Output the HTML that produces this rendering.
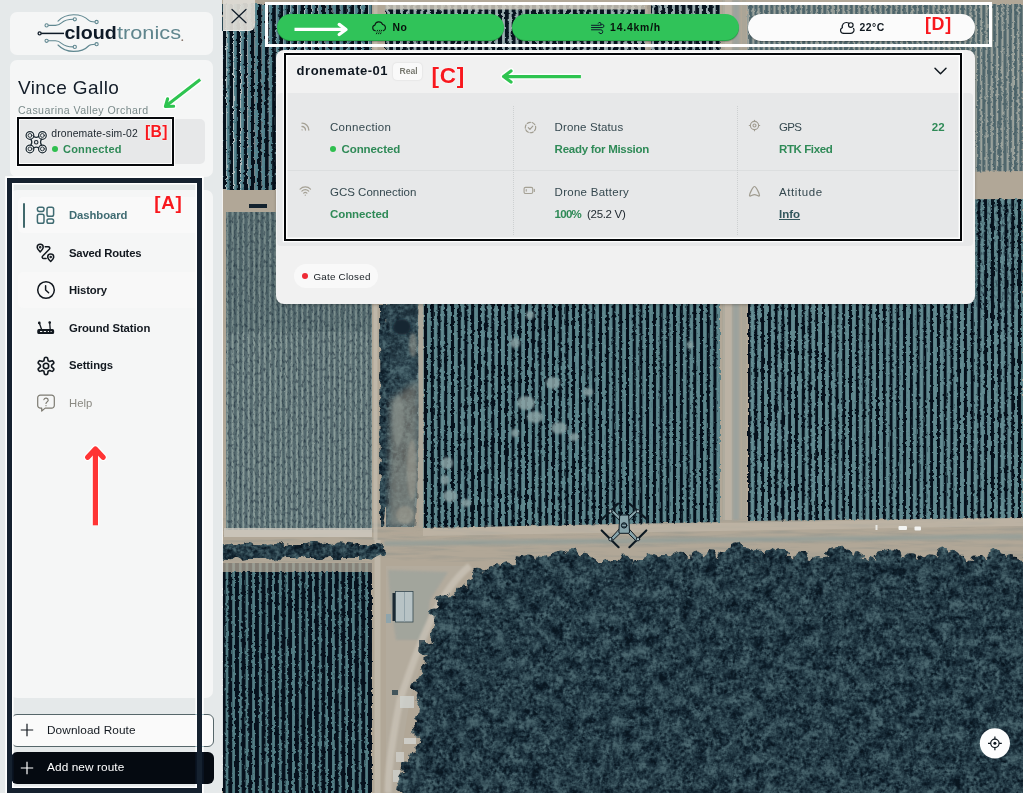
<!DOCTYPE html>
<html lang="en">
<head>
<meta charset="utf-8">
<title>Cloudtronics Dashboard</title>
<style>
*{box-sizing:border-box;margin:0;padding:0}
html,body{width:1023px;height:793px;overflow:hidden;background:#e6e9ea;font-family:"Liberation Sans",sans-serif;color:#111820}
.abs{position:absolute}
.t{position:absolute;white-space:nowrap;line-height:1}
#stage{position:relative;width:1023px;height:793px;overflow:hidden}
#map{position:absolute;left:0;top:0;width:1023px;height:793px}
.card{position:absolute;background:#f5f6f6;border-radius:7px}
.green{color:#2f8a57}
.lbl{color:#35484f;font-size:11.5px}
.val{font-weight:bold;font-size:11.5px}
.nav{font-weight:bold;font-size:11.3px;color:#12181f}
.ann{font-weight:bold;color:#f8181e;text-shadow:0 0 1.500px #fff,0 0 1px #fff}
</style>
</head>
<body>
<div id="stage">

<!-- MAP -->
<svg id="map" viewBox="0 0 1023 793">
<rect x="222" y="0" width="801" height="793" fill="#4a6670"/>
<!--MAPCONTENT_START-->
<defs>
<linearGradient id="gMid" gradientUnits="userSpaceOnUse" x1="600.54" y1="0" x2="607.27" y2="0" spreadMethod="repeat"><stop offset="0.000" stop-color="#040e1a"/><stop offset="0.160" stop-color="#06121d"/><stop offset="0.280" stop-color="#557d84"/><stop offset="0.500" stop-color="#628b91"/><stop offset="0.720" stop-color="#557d84"/><stop offset="0.840" stop-color="#06121d"/><stop offset="1.000" stop-color="#040e1a"/></linearGradient>
<linearGradient id="gRight" gradientUnits="userSpaceOnUse" x1="884.30" y1="0" x2="891.06" y2="0" spreadMethod="repeat"><stop offset="0.000" stop-color="#050f1b"/><stop offset="0.150" stop-color="#06121d"/><stop offset="0.270" stop-color="#587f86"/><stop offset="0.500" stop-color="#668e94"/><stop offset="0.730" stop-color="#587f86"/><stop offset="0.850" stop-color="#06121d"/><stop offset="1.000" stop-color="#050f1b"/></linearGradient>
<linearGradient id="gLB" gradientUnits="userSpaceOnUse" x1="283.50" y1="0" x2="290.15" y2="0" spreadMethod="repeat"><stop offset="0.000" stop-color="#050f1b"/><stop offset="0.230" stop-color="#07131f"/><stop offset="0.350" stop-color="#4c757c"/><stop offset="0.500" stop-color="#568087"/><stop offset="0.650" stop-color="#4c757c"/><stop offset="0.770" stop-color="#07131f"/><stop offset="1.000" stop-color="#050f1b"/></linearGradient>
<linearGradient id="gLT" gradientUnits="userSpaceOnUse" x1="283.50" y1="0" x2="288.86" y2="0" spreadMethod="repeat"><stop offset="0.000" stop-color="#52676c"/><stop offset="0.200" stop-color="#5a6f73"/><stop offset="0.420" stop-color="#849897"/><stop offset="0.580" stop-color="#8c9d9a"/><stop offset="0.800" stop-color="#5a6f73"/><stop offset="1.000" stop-color="#52676c"/></linearGradient>
<linearGradient id="gTL" gradientUnits="userSpaceOnUse" x1="224.50" y1="0" x2="231.60" y2="0" spreadMethod="repeat"><stop offset="0.000" stop-color="#050f1a"/><stop offset="0.170" stop-color="#06111c"/><stop offset="0.260" stop-color="#b9c4c5"/><stop offset="0.350" stop-color="#5a8791"/><stop offset="0.660" stop-color="#4d7d88"/><stop offset="0.780" stop-color="#06111c"/><stop offset="1.000" stop-color="#050f1a"/></linearGradient>
<linearGradient id="gTR" gradientUnits="userSpaceOnUse" x1="978.50" y1="0" x2="983.80" y2="0" spreadMethod="repeat"><stop offset="0.000" stop-color="#4a6268"/><stop offset="0.200" stop-color="#586d72"/><stop offset="0.420" stop-color="#969f9a"/><stop offset="0.600" stop-color="#9fa59e"/><stop offset="0.800" stop-color="#586d72"/><stop offset="1.000" stop-color="#4a6268"/></linearGradient>
<linearGradient id="gTop" gradientUnits="userSpaceOnUse" x1="262.00" y1="0" x2="268.80" y2="0" spreadMethod="repeat"><stop offset="0.000" stop-color="#07121d"/><stop offset="0.220" stop-color="#0a1621"/><stop offset="0.340" stop-color="#8ba1a5"/><stop offset="0.500" stop-color="#a3b1b2"/><stop offset="0.660" stop-color="#8ba1a5"/><stop offset="0.780" stop-color="#0a1621"/><stop offset="1.000" stop-color="#07121d"/></linearGradient>
<filter id="fRough" x="-2%" y="-2%" width="104%" height="104%" color-interpolation-filters="sRGB"><feTurbulence type="fractalNoise" baseFrequency="0.3 0.33" numOctaves="1" seed="3" result="n"/><feDisplacementMap in="SourceGraphic" in2="n" scale="3.6" xChannelSelector="R" yChannelSelector="G"/></filter>
<filter id="fRoughS" x="-2%" y="-2%" width="104%" height="104%"><feTurbulence type="fractalNoise" baseFrequency="0.3 0.33" numOctaves="1" seed="4" result="n"/><feDisplacementMap in="SourceGraphic" in2="n" scale="1.8" xChannelSelector="R" yChannelSelector="G"/></filter>
<filter id="fRough2" x="-2%" y="-2%" width="104%" height="104%"><feTurbulence type="fractalNoise" baseFrequency="0.3 0.2" numOctaves="2" seed="8" result="n"/><feDisplacementMap in="SourceGraphic" in2="n" scale="3" xChannelSelector="R" yChannelSelector="G"/></filter>
<filter id="fForest" x="0" y="0" width="100%" height="100%" color-interpolation-filters="sRGB"><feTurbulence type="fractalNoise" baseFrequency="0.3" numOctaves="2" seed="5" result="n"/><feTurbulence type="fractalNoise" baseFrequency="0.085" numOctaves="2" seed="12" result="nb"/><feComposite in="n" in2="nb" operator="arithmetic" k1="0" k2="0.5" k3="0.5" k4="0" result="mix"/><feColorMatrix in="mix" type="matrix" values="1.5 1.5 0 0 -1.0  1.5 1.5 0 0 -1.0  1.5 1.5 0 0 -1.0  0 0 0 0 1" result="g"/><feComponentTransfer in="g" result="c"><feFuncR type="table" tableValues="0.035 0.06 0.115 0.18 0.25 0.30"/><feFuncG type="table" tableValues="0.085 0.125 0.195 0.275 0.355 0.41"/><feFuncB type="table" tableValues="0.125 0.17 0.24 0.315 0.39 0.44"/></feComponentTransfer><feTurbulence type="fractalNoise" baseFrequency="0.11" numOctaves="2" seed="2" result="nd"/><feDisplacementMap in="SourceGraphic" in2="nd" scale="9" xChannelSelector="R" yChannelSelector="G" result="shape"/><feComposite in="c" in2="shape" operator="in"/></filter>
<filter id="fSpeck" x="0" y="0" width="100%" height="100%" color-interpolation-filters="sRGB"><feTurbulence type="fractalNoise" baseFrequency="0.5 0.25" numOctaves="2" seed="21" result="n"/><feColorMatrix in="n" type="matrix" values="0 0 0 0 0.06  0 0 0 0 0.12  0 0 0 0 0.18  3 0 0 0 -1.45" result="sp"/><feComposite in="sp" in2="SourceGraphic" operator="in"/></filter>
<filter id="fRoad" x="0" y="0" width="100%" height="100%" color-interpolation-filters="sRGB"><feTurbulence type="fractalNoise" baseFrequency="0.02 0.25" numOctaves="3" seed="14" result="n"/><feColorMatrix in="n" type="matrix" values="0 0 0 0 0.5  0 0 0 0 0.54  0 0 0 0 0.53  0 2.4 0 0 -1.05" result="sp"/><feComposite in="sp" in2="SourceGraphic" operator="in"/></filter>
<filter id="fBlur1"><feGaussianBlur stdDeviation="1.2"/></filter>
<filter id="fBlur3"><feGaussianBlur stdDeviation="3"/></filter>
<clipPath id="cMap"><rect x="222" y="0" width="801" height="793"/></clipPath>
</defs>
<g clip-path="url(#cMap)">
<rect x="222" y="0" width="801" height="793" fill="#b1a797"/>
<rect x="222" y="518" width="801" height="44" fill="#fff" filter="url(#fRoad)" opacity=".35"/>
<g filter="url(#fRough)">
<rect x="222" y="4" width="150" height="186" fill="url(#gTL)"/>
<polygon points="385,4 720,4 720,176 385,186" fill="url(#gTop)"/>
<polygon points="747,4 1023,4 1023,171 747,175" fill="url(#gTR)"/>
</g>
<rect x="385" y="5" width="262" height="4.500" fill="#cfc9bd" opacity=".85"/>
<rect x="645" y="0" width="6" height="50" fill="#b6ac9d" opacity=".9"/>
<g filter="url(#fRoughS)"><rect x="226" y="212" width="146" height="318" fill="url(#gLT)"/></g>
<rect x="226" y="212" width="146" height="318" fill="#000" filter="url(#fSpeck)" opacity=".55"/>
<rect x="226" y="212" width="146" height="120" fill="#1d3540" opacity=".13"/>
<rect x="224" y="528" width="148" height="9" fill="#cfcac0" opacity=".8"/>
<rect x="226" y="516" width="146" height="14" fill="url(#gLT)" opacity=".0"/>
<g filter="url(#fRough)"><rect x="222" y="572" width="150" height="225" fill="url(#gLB)"/></g>
<rect x="222" y="563" width="150" height="10" fill="url(#gLB)" opacity=".25"/>
<g filter="url(#fRough)"><polygon points="423,195 720,190 720,522 423,528" fill="url(#gMid)"/></g>
<g filter="url(#fRough)"><polygon points="748,200 1023,199 1023,518 748,521" fill="url(#gRight)"/></g>
<rect x="975" y="200" width="48" height="110" fill="#000" filter="url(#fSpeck)" opacity=".6"/>
<g filter="url(#fBlur1)" fill="#8aa3a5" opacity=".85">
<ellipse cx="530" cy="315" rx="4" ry="4"/>
<ellipse cx="515" cy="343" rx="5" ry="5"/>
<ellipse cx="553" cy="383" rx="7" ry="6"/>
<ellipse cx="526" cy="403" rx="9" ry="7"/>
<ellipse cx="535" cy="417" rx="8" ry="6"/>
<ellipse cx="559" cy="428" rx="8" ry="6"/>
<ellipse cx="574" cy="437" rx="5" ry="4"/>
<ellipse cx="515" cy="433" rx="4" ry="4"/>
<ellipse cx="447" cy="463" rx="6" ry="6"/>
<ellipse cx="450" cy="496" rx="7" ry="6"/>
<ellipse cx="466" cy="503" rx="5" ry="4"/>
<ellipse cx="445" cy="480" rx="4" ry="5"/>
<ellipse cx="690" cy="345" rx="3" ry="4"/>
<ellipse cx="588" cy="392" rx="5" ry="4"/>
</g>
<polygon points="387,303 418,303 419,420 417,500 414,527 386,527" fill="#607c83"/>
<g filter="url(#fForest)" opacity=".55"><polygon points="387,303 418,303 419,420 417,500 414,527 386,527" fill="#000"/></g>
<g filter="url(#fForest)" opacity=".6"><polygon points="387,303 417,303 418,380 410,430 400,470 387,480" fill="#000"/></g>
<g filter="url(#fForest)"><polygon points="379,303 388,303 390,360 389,430 388,500 385,527 380,527" fill="#000"/></g>
<g filter="url(#fBlur1)"><ellipse cx="402" cy="327" rx="9" ry="8" fill="#122530"/>
<ellipse cx="413" cy="345" rx="4" ry="12" fill="#a9a79b" opacity=".5"/><ellipse cx="412" cy="470" rx="5" ry="30" fill="#a9a79b" opacity=".45"/><ellipse cx="405" cy="515" rx="9" ry="9" fill="#aaa89c" opacity=".5"/><ellipse cx="398" cy="420" rx="6" ry="25" fill="#6f8b90" opacity=".6"/></g>
<rect x="418.500" y="303" width="5" height="224" fill="#aca89b" opacity=".9"/>
<polygon points="390,400 418,380 418,527 388,527" fill="#a69f90" opacity=".5" filter="url(#fBlur3)"/>
<rect x="373.500" y="0" width="4" height="540" fill="#c5bdb0" opacity=".7"/><rect x="374.500" y="540" width="6" height="253" fill="#c5bdb0" opacity=".7"/>
<rect x="723" y="0" width="9" height="520" fill="#c3bbae" opacity=".55"/>
<rect x="732.500" y="0" width="7" height="520" fill="#8c9fa3" opacity=".55" filter="url(#fBlur1)"/>
<rect x="722" y="0" width="3" height="520" fill="#a3a398" opacity=".5"/>
<rect x="742" y="0" width="4" height="520" fill="#a3a398" opacity=".5"/>
<polygon points="384,541 1023,534 1023,539 384,546" fill="#8a9b9a" opacity=".6" filter="url(#fBlur1)"/>
<polygon points="423,528 1023,518 1023,526 423,536" fill="#c4bbad" opacity=".55"/>
<polygon points="386,566 470,566 440,600 425,650 410,700 400,760 398,793 386,793" fill="#b3ab9d"/>
<polygon points="388,570 448,572 430,600 426,640 396,640 390,600" fill="#9da39c" opacity=".75" filter="url(#fBlur1)"/>
<path d="M470,566 C440,590 420,640 400,700 C392,740 388,770 388,793" stroke="#c9c2b6" stroke-width="7" fill="none" opacity=".8" filter="url(#fBlur1)"/>
<rect x="392.500" y="593" width="3" height="28" fill="#1b2a34"/>
<rect x="395.500" y="591.500" width="17.500" height="30.500" fill="#b7c3c5" stroke="#34474f" stroke-width=".8"/><rect x="404" y="592" width="1" height="29.500" fill="#93a4aa"/>
<rect x="386" y="614" width="5" height="9" fill="#8fa4ab"/>
<rect x="400" y="696" width="14" height="12" fill="#cfd3d0" opacity=".8"/>
<rect x="404" y="738" width="12" height="6" fill="#d5d6d2" opacity=".8"/>
<rect x="392" y="690" width="6" height="5" fill="#27404b" opacity=".8"/>
<rect x="396" y="752" width="8" height="10" fill="#d0d0cb" opacity=".8"/>
<rect x="393" y="770" width="7" height="12" fill="#cdd0cc" opacity=".8"/>
<rect x="419" y="640" width="6" height="7" fill="#2a3f4a" opacity=".8"/>
<rect x="424" y="668" width="5" height="8" fill="#d0d2ce" opacity=".8"/>
<g filter="url(#fForest)">
<polygon points="1030,562 1015,560 994,559 975,562 946,555 925,562 892,556 870,562 842,551 815,562 790,557 772,552 755,562 741,546 725,559 700,559 670,556 645,560 620,563 595,563 575,556 563,553 545,557 522,563 500,566 480,574 467,588 450,598 436,609 434,626 441,636 428,649 426,668 417,680 417,692 422,706 417,725 422,744 406,763 402,783 405,800 1030,800" fill="#000"/>
<circle cx="1027.6" cy="561.3" r="5.7" fill="#000"/>
<circle cx="1010.5" cy="559.9" r="5.8" fill="#000"/>
<circle cx="998.9" cy="558.1" r="6.7" fill="#000"/>
<circle cx="994.3" cy="556.3" r="6.7" fill="#000"/>
<circle cx="979.5" cy="562.1" r="7.4" fill="#000"/>
<circle cx="974.2" cy="559.1" r="3.6" fill="#000"/>
<circle cx="962.4" cy="559.2" r="4.5" fill="#000"/>
<circle cx="953.2" cy="557.6" r="6.9" fill="#000"/>
<circle cx="942.7" cy="554.7" r="6.1" fill="#000"/>
<circle cx="930.6" cy="561.8" r="7.5" fill="#000"/>
<circle cx="922.1" cy="559.0" r="4.4" fill="#000"/>
<circle cx="910.3" cy="558.4" r="5.1" fill="#000"/>
<circle cx="894.7" cy="555.1" r="6.9" fill="#000"/>
<circle cx="887.9" cy="557.0" r="5.4" fill="#000"/>
<circle cx="881.6" cy="557.8" r="6.0" fill="#000"/>
<circle cx="871.4" cy="563.4" r="4.8" fill="#000"/>
<circle cx="858.4" cy="555.4" r="4.5" fill="#000"/>
<circle cx="847.1" cy="552.6" r="4.2" fill="#000"/>
<circle cx="839.5" cy="552.3" r="6.4" fill="#000"/>
<circle cx="831.2" cy="553.5" r="5.2" fill="#000"/>
<circle cx="818.0" cy="562.8" r="6.7" fill="#000"/>
<circle cx="814.8" cy="562.5" r="5.1" fill="#000"/>
<circle cx="800.6" cy="557.9" r="7.5" fill="#000"/>
<circle cx="785.0" cy="553.3" r="4.8" fill="#000"/>
<circle cx="779.5" cy="555.0" r="5.8" fill="#000"/>
<circle cx="771.9" cy="553.0" r="5.3" fill="#000"/>
<circle cx="759.3" cy="556.6" r="7.0" fill="#000"/>
<circle cx="750.2" cy="555.8" r="6.8" fill="#000"/>
<circle cx="743.7" cy="553.2" r="7.3" fill="#000"/>
<circle cx="736.5" cy="547.1" r="5.9" fill="#000"/>
<circle cx="731.8" cy="553.9" r="7.4" fill="#000"/>
<circle cx="723.5" cy="557.8" r="6.8" fill="#000"/>
<circle cx="709.5" cy="557.4" r="6.4" fill="#000"/>
<circle cx="697.1" cy="557.3" r="6.9" fill="#000"/>
<circle cx="682.6" cy="556.1" r="4.3" fill="#000"/>
<circle cx="676.0" cy="555.9" r="3.7" fill="#000"/>
<circle cx="665.2" cy="559.0" r="4.0" fill="#000"/>
<circle cx="650.9" cy="559.7" r="6.1" fill="#000"/>
<circle cx="642.0" cy="562.6" r="3.6" fill="#000"/>
<circle cx="625.3" cy="562.9" r="7.4" fill="#000"/>
<circle cx="615.7" cy="566.0" r="6.4" fill="#000"/>
<circle cx="607.9" cy="565.4" r="5.7" fill="#000"/>
<circle cx="591.8" cy="563.9" r="6.3" fill="#000"/>
<circle cx="584.5" cy="561.0" r="6.2" fill="#000"/>
<circle cx="573.5" cy="555.7" r="6.7" fill="#000"/>
<circle cx="560.0" cy="554.4" r="5.0" fill="#000"/>
<circle cx="555.5" cy="557.4" r="6.1" fill="#000"/>
<circle cx="540.9" cy="558.8" r="5.1" fill="#000"/>
<circle cx="528.8" cy="562.3" r="6.9" fill="#000"/>
<circle cx="521.7" cy="561.4" r="5.9" fill="#000"/>
<circle cx="506.8" cy="567.7" r="5.5" fill="#000"/>
<circle cx="497.7" cy="567.7" r="3.5" fill="#000"/>
<circle cx="490.4" cy="571.4" r="4.2" fill="#000"/>
<circle cx="477.6" cy="576.9" r="7.1" fill="#000"/>
<circle cx="473.9" cy="584.3" r="5.2" fill="#000"/>
<circle cx="462.8" cy="589.5" r="5.0" fill="#000"/>
<circle cx="459.2" cy="595.5" r="5.5" fill="#000"/>
<circle cx="443.1" cy="600.7" r="7.3" fill="#000"/>
<circle cx="434.3" cy="613.1" r="4.6" fill="#000"/>
<circle cx="435.9" cy="631.8" r="5.5" fill="#000"/>
<circle cx="435.5" cy="637.0" r="5.3" fill="#000"/>
<circle cx="431.9" cy="646.3" r="3.7" fill="#000"/>
<circle cx="425.9" cy="648.6" r="6.7" fill="#000"/>
<circle cx="428.0" cy="659.5" r="3.6" fill="#000"/>
<circle cx="425.8" cy="668.7" r="3.7" fill="#000"/>
<circle cx="418.2" cy="687.3" r="6.1" fill="#000"/>
<circle cx="419.0" cy="695.8" r="4.3" fill="#000"/>
<circle cx="422.8" cy="704.1" r="5.4" fill="#000"/>
<circle cx="419.9" cy="717.2" r="4.9" fill="#000"/>
<circle cx="417.5" cy="730.3" r="6.5" fill="#000"/>
<circle cx="422.6" cy="741.0" r="3.8" fill="#000"/>
<circle cx="421.9" cy="747.2" r="5.3" fill="#000"/>
<circle cx="413.7" cy="757.4" r="5.8" fill="#000"/>
<circle cx="405.5" cy="766.9" r="5.4" fill="#000"/>
<circle cx="403.7" cy="778.6" r="6.8" fill="#000"/>
<circle cx="404.3" cy="788.0" r="7.1" fill="#000"/>
<rect x="222" y="545" width="150" height="13" fill="#000"/>
<circle cx="222.0" cy="551.9" r="7.1" fill="#000"/>
<circle cx="228.3" cy="552.1" r="8.2" fill="#000"/>
<circle cx="234.7" cy="550.8" r="5.7" fill="#000"/>
<circle cx="241.9" cy="551.0" r="7.8" fill="#000"/>
<circle cx="247.0" cy="549.7" r="7.9" fill="#000"/>
<circle cx="255.2" cy="550.5" r="6.0" fill="#000"/>
<circle cx="263.3" cy="549.9" r="5.9" fill="#000"/>
<circle cx="270.4" cy="552.0" r="7.7" fill="#000"/>
<circle cx="278.2" cy="551.0" r="8.3" fill="#000"/>
<circle cx="287.0" cy="550.2" r="5.8" fill="#000"/>
<circle cx="294.1" cy="551.7" r="6.4" fill="#000"/>
<circle cx="301.6" cy="552.0" r="7.1" fill="#000"/>
<circle cx="308.9" cy="550.6" r="6.4" fill="#000"/>
<circle cx="317.2" cy="550.1" r="8.2" fill="#000"/>
<circle cx="325.6" cy="551.1" r="8.4" fill="#000"/>
<circle cx="332.9" cy="551.1" r="6.1" fill="#000"/>
<circle cx="340.0" cy="549.6" r="7.3" fill="#000"/>
<circle cx="348.8" cy="550.7" r="7.0" fill="#000"/>
<circle cx="357.0" cy="551.0" r="7.2" fill="#000"/>
<circle cx="364.8" cy="551.1" r="5.7" fill="#000"/>
<circle cx="371.5" cy="552.3" r="8.4" fill="#000"/>
<circle cx="377.5" cy="549.9" r="6.9" fill="#000"/>
</g>
<rect x="898.500" y="526" width="8.500" height="4" rx="1" fill="#f3f4f2"/><rect x="914.500" y="526.500" width="6.500" height="4" rx="1" fill="#f3f4f2"/><rect x="875.500" y="525" width="2" height="5" fill="#e8e8e4"/>
<rect x="305" y="510" width="22" height="4" fill="#1a2c38" opacity="0"/>
<rect x="249" y="204" width="18" height="4" fill="#13222e"/>
</g>
<g stroke-linecap="round" stroke-linejoin="round">
<g stroke="#0d1922" stroke-width="2.100" fill="none">
<path d="M618.2 503.600L601.700 519.600M629.400 503.600L647.300 519.600M601.700 530.400L618.600 547.200M646.300 530.400L629.400 547.200"/>
</g>
<g fill="#86a3aa" stroke="#0d1922" stroke-width="1">
<path d="M610 510.300L612.300 509.600L620 516.300L620 520.500Z"/><path d="M638.400 510.300L636.100 509.600L628.400 516.300L628.400 520.500Z"/>
<path d="M609.800 540L612.200 541L620 533.500L620 528.500Z"/><path d="M638.600 540L636.200 541L628.400 533.500L628.400 528.500Z"/>
<path d="M620.700 515H627.700Q628.600 515 628.700 516L629.500 532Q629.500 533.300 628.300 533.300H620.100Q618.900 533.300 618.900 532L619.700 516Q619.800 515 620.700 515Z"/>
</g>
<circle cx="624.100" cy="525.400" r="2.700" fill="#3d5661" stroke="#0d1922" stroke-width="1"/><path d="M622.600 525.400h3" stroke="#a9bfc3" stroke-width=".8"/>
<circle cx="610.4" cy="511.3" r="1.700" fill="#a9bfc3" stroke="#0d1922" stroke-width=".9"/>
<circle cx="638.0" cy="511.3" r="1.700" fill="#a9bfc3" stroke="#0d1922" stroke-width=".9"/>
<circle cx="610.4" cy="539.2" r="1.700" fill="#a9bfc3" stroke="#0d1922" stroke-width=".9"/>
<circle cx="638.0" cy="539.2" r="1.700" fill="#a9bfc3" stroke="#0d1922" stroke-width=".9"/>
</g>
<circle cx="994.900" cy="743.300" r="15.100" fill="#fdfdfd"/>
<g stroke="#0b141c" fill="none" stroke-width="1.200"><circle cx="994.900" cy="743.300" r="4.200"/><path d="M994.900 736.400v2.700M994.900 747.500v2.700M988 743.300h2.700M999.100 743.300h2.700"/></g><circle cx="994.900" cy="743.300" r="1.500" fill="#0b141c"/><!--MAPCONTENT_END-->
</svg>

<!-- SIDEBAR -->
<div class="abs" id="side" style="left:0;top:0;width:222px;height:793px;background:#e5e9ea;border-radius:0 0 10px 0"></div>
<!--SIDEBAR_START-->
<!-- logo card -->
<div class="card" style="left:10px;top:12px;width:203px;height:43px"></div>
<svg class="abs" style="left:0;top:0" width="222" height="60" viewBox="0 0 222 60">
  <g fill="none" stroke="#5f8790" stroke-width="1.1" stroke-linecap="round">
    <path d="M48.2 25.4H55.5C58.5 25.4 59.5 24.6 61.5 22.8C65 19.8 69 19.3 73.2 19.3"/>
    <path d="M48.2 40.8H55.5C58.5 40.8 59.5 41.6 61.5 43.4C65 46.4 69 46.9 73.2 46.9"/>
    <path d="M58 21.2C62 17 67 14.8 73.5 14.8C80 14.8 85.5 17 88.5 20.2C89.8 21.6 91.5 22 95 22"/>
    <path d="M58 45C62 49.2 67 51.4 73.5 51.4C80 51.4 85.5 49.2 88.5 46C89.8 44.6 91.5 44.2 95 44.2"/>
    <circle cx="46.6" cy="25.4" r="1.6" fill="#f5f6f6"/>
    <circle cx="46.6" cy="40.8" r="1.6" fill="#f5f6f6"/>
    <circle cx="74.8" cy="19.3" r="1.6" fill="#f5f6f6"/>
    <circle cx="74.8" cy="46.9" r="1.6" fill="#f5f6f6"/>
    <circle cx="96.6" cy="22" r="1.6" fill="#f5f6f6"/>
    <circle cx="96.6" cy="44.2" r="1.6" fill="#f5f6f6"/>
  </g>
  <path d="M41 33.4H64" stroke="#0e1a27" stroke-width="1.5" fill="none"/>
  <circle cx="39.6" cy="33.4" r="1.5" fill="#f5f6f6" stroke="#0e1a27" stroke-width="1.3"/>
  <text x="64.4" y="38.8" font-family="Liberation Sans, sans-serif" font-size="19" font-weight="bold" fill="#0e1a27" textLength="52.4" lengthAdjust="spacingAndGlyphs">cloud</text>
  <text x="117" y="38.8" font-family="Liberation Sans, sans-serif" font-size="19" fill="#5f858d" textLength="64" lengthAdjust="spacingAndGlyphs">tronics</text>
  <circle cx="182.3" cy="40.2" r="0.9" fill="#8a7a70"/>
</svg>

<!-- user card -->
<div class="card" style="left:10px;top:60px;width:203px;height:117px"></div>
<div class="t" id="t_name" style="left:18px;top:78.300px;font-size:19px;color:#121c28;letter-spacing:0.4px">Vince Gallo</div>
<div class="t" id="t_farm" style="left:18px;top:104.5px;font-size:10.6px;color:#7b8b8b;letter-spacing:0.42px">Casuarina Valley Orchard</div>
<div class="abs" style="left:18px;top:119px;width:187px;height:45px;background:#e7e8e9;border-radius:5px"></div>
<svg class="abs" style="left:23.900px;top:129.800px" width="24" height="24" viewBox="0 0 24 24" fill="none" stroke="#1d2a33" stroke-width="1.250" stroke-linecap="round" stroke-linejoin="round">
  <g stroke="#f7f8f8" stroke-width="3.200" opacity=".75"><circle cx="5.95" cy="5.45" r="3.850"/><circle cx="18.40" cy="5.45" r="3.850"/><circle cx="5.95" cy="18.90" r="3.850"/><circle cx="18.40" cy="18.90" r="3.850"/><path d="M9.700 6.400Q12.200 8.200 14.700 6.400M9.700 17.950Q12.200 16.150 14.700 17.950M6.900 9.200Q8.800 12.200 6.900 15.150M17.450 9.200Q15.550 12.200 17.450 15.150"/></g>
  <circle cx="5.95" cy="5.45" r="3.850"/><circle cx="18.40" cy="5.45" r="3.850"/><circle cx="5.95" cy="18.90" r="3.850"/><circle cx="18.40" cy="18.90" r="3.850"/>
  <g stroke-width=".9"><circle cx="5.95" cy="5.45" r="1.950"/><circle cx="18.40" cy="5.45" r="1.950"/><circle cx="5.95" cy="18.90" r="1.950"/><circle cx="18.40" cy="18.90" r="1.950"/></g>
  <path d="M9.700 6.400Q12.200 8.200 14.700 6.400M9.700 17.950Q12.200 16.150 14.700 17.950M6.900 9.200Q8.800 12.200 6.900 15.150M17.450 9.200Q15.550 12.200 17.450 15.150"/>
  <circle cx="12.200" cy="12.200" r="1.750" stroke-width="1.100"/>
</svg>
<div class="t" id="t_dev" style="left:51.3px;top:128.6px;font-size:10.4px;color:#1b242c;letter-spacing:0.14px">dronemate-sim-02</div>
<div class="abs" style="left:51.6px;top:146px;width:6px;height:6px;border-radius:50%;background:#2fbf4f"></div>
<div class="t green" id="t_conn0" style="left:63px;top:144px;font-size:11px;font-weight:bold;letter-spacing:0.2px">Connected</div>

<!-- nav card -->
<div class="card" style="left:10px;top:190px;width:203px;height:507.5px"></div>
<div class="abs" style="left:18px;top:197px;width:187px;height:36px;background:#f9f9f9;border-radius:5px"></div>
<div class="abs" style="left:18px;top:272px;width:187px;height:36px;background:#f8f8f8;border-radius:5px"></div>
<div class="abs" style="left:23.300px;top:203px;width:2.200px;height:24.500px;background:#41696c;border-radius:1px"></div>

<svg class="abs" style="left:35px;top:204px" width="22" height="22" viewBox="0 0 22 22" fill="none" stroke="#3f6b72" stroke-width="1.500" stroke-linejoin="round">
  <rect x="2.4" y="3.2" width="6.6" height="4.2" rx="1.800"/><rect x="2.4" y="10.2" width="6.6" height="9" rx="1.800"/>
  <rect x="12" y="3.2" width="6.6" height="9" rx="1.800"/><rect x="12" y="15" width="6.6" height="4.2" rx="1.800"/>
</svg>
<div class="t nav" id="t_n1" style="left:69px;top:210px;color:#3f6b72;letter-spacing:-0.08px">Dashboard</div>

<svg class="abs" style="left:35px;top:242px" width="22" height="22" viewBox="0 0 22 22" fill="none" stroke="#12181f" stroke-width="1.500" stroke-linecap="round" stroke-linejoin="round">
  <path d="M5.200 9.900c-2.100-2.100-3-3.200-3-4.600a3 3 0 0 1 6 0c0 1.400-.9 2.500-3 4.600z"/><circle cx="5.200" cy="5.300" r=".5"/>
  <path d="M15.700 19.500c-2.100-2.100-3-3.200-3-4.600a3 3 0 0 1 6 0c0 1.400-.9 2.500-3 4.600z"/><circle cx="15.700" cy="14.900" r=".5"/>
  <path d="M10.200 4.700h3a1.500 1.500 0 0 1 1.100 2.600l-6.600 6.700a1.500 1.500 0 0 0 1.100 2.600h2.300"/>
</svg>
<div class="t nav" id="t_n2" style="left:69px;top:247.6px;letter-spacing:-0.2px">Saved Routes</div>

<svg class="abs" style="left:34.700px;top:279.400px" width="22" height="22" viewBox="0 0 22 22" fill="none" stroke="#12181f" stroke-width="1.500" stroke-linecap="round" stroke-linejoin="round">
  <circle cx="11" cy="11" r="8.300"/><path d="M10.600 6.800V11l3 2.700"/>
</svg>
<div class="t nav" id="t_n3" style="left:69px;top:285.200px;letter-spacing:-0.15px">History</div>

<svg class="abs" style="left:35px;top:317px" width="22" height="22" viewBox="0 0 22 22" fill="none" stroke="#12181f" stroke-width="1.300" stroke-linecap="round" stroke-linejoin="round">
  <rect x="2.900" y="12.700" width="15.600" height="3.700" rx="1" fill="#12181f"/>
  <path d="M4.400 6.300L6.600 12.500M14.700 5.800L15.200 12.500"/><circle cx="4.300" cy="5.900" r=".7" fill="#12181f"/><circle cx="14.700" cy="5.500" r=".7" fill="#12181f"/>
  <path d="M5 14.550h2.300M8.800 14.550h2.300M12.800 14.550h1.200M15.600 14.550h1" stroke="#f1f2f2" stroke-width="1.100" stroke-linecap="butt"/>
</svg>
<div class="t nav" id="t_n4" style="left:69px;top:322.800px;letter-spacing:-0.07px">Ground Station</div>

<svg class="abs" style="left:34.700px;top:354.700px" width="22" height="22" viewBox="0 0 22 22" fill="none" stroke="#12181f" stroke-width="1.600" stroke-linecap="round" stroke-linejoin="round"><path d="M11.00 2.40L11.75 2.43L12.44 2.83L12.84 4.14L13.02 5.46L13.37 5.92L13.80 6.15L14.21 6.41L14.79 6.48L16.02 5.98L17.36 5.66L18.04 6.07L18.45 6.70L18.79 7.37L18.80 8.16L17.86 9.16L16.81 9.98L16.58 10.51L16.60 11.00L16.58 11.49L16.81 12.02L17.86 12.84L18.80 13.84L18.79 14.63L18.45 15.30L18.04 15.93L17.36 16.34L16.02 16.02L14.79 15.52L14.21 15.59L13.80 15.85L13.37 16.08L13.02 16.54L12.84 17.86L12.44 19.17L11.75 19.57L11.00 19.60L10.25 19.57L9.56 19.17L9.16 17.86L8.98 16.54L8.63 16.08L8.20 15.85L7.79 15.59L7.21 15.52L5.98 16.02L4.64 16.34L3.96 15.93L3.55 15.30L3.21 14.63L3.20 13.84L4.14 12.84L5.19 12.02L5.42 11.49L5.40 11.00L5.42 10.51L5.19 9.98L4.14 9.16L3.20 8.16L3.21 7.37L3.55 6.70L3.96 6.07L4.64 5.66L5.98 5.98L7.21 6.48L7.79 6.41L8.20 6.15L8.63 5.92L8.98 5.46L9.16 4.14L9.56 2.83L10.25 2.43Z"/><circle cx="11" cy="11" r="2.700"/></svg>
<div class="t nav" id="t_n5" style="left:69px;top:360.400px;letter-spacing:-0.07px">Settings</div>

<svg class="abs" style="left:35px;top:392.400px" width="22" height="22" viewBox="0 0 22 22" fill="none" stroke="#7d7b72" stroke-width="1.200" stroke-linecap="round" stroke-linejoin="round">
  <path d="M5.400 3.100h11.200a2.700 2.700 0 0 1 2.700 2.700v7.600a2.700 2.700 0 0 1-2.700 2.700H10.200L6.700 19V16.100H5.400a2.700 2.700 0 0 1-2.700-2.700V5.800a2.700 2.700 0 0 1 2.700-2.700z"/>
  <path d="M8.900 7.600a2.200 2.200 0 0 1 4.300.6c0 1.500-2.200 1.800-2.200 3.300M11 13.600v.1"/>
</svg>
<div class="t nav" id="t_n6" style="left:69px;top:398px;color:#8a8982;font-weight:normal">Help</div>

<!-- buttons -->
<div class="abs" style="left:10.500px;top:713.500px;width:203px;height:33px;background:#fafafa;border:1px solid #56666a;border-radius:6px"></div>
<svg class="abs" style="left:20px;top:722.700px" width="14" height="14" viewBox="0 0 14 14" stroke="#12181f" stroke-width="1.200" fill="none"><path d="M7 .8v12.400M.8 7h12.400"/></svg>
<div class="t" id="t_dl" style="left:47px;top:724.600px;font-size:11.800px;color:#12181f;letter-spacing:0.1px">Download Route</div>
<div class="abs" style="left:10.500px;top:752.200px;width:203px;height:31.500px;background:#050a11;border-radius:6px"></div>
<svg class="abs" style="left:20px;top:761px" width="14" height="14" viewBox="0 0 14 14" stroke="#ffffff" stroke-width="1.200" fill="none"><path d="M7 .8v12.400M.8 7h12.400"/></svg>
<div class="t" id="t_add" style="left:47px;top:762.400px;font-size:11.800px;color:#ffffff;letter-spacing:0.1px">Add new route</div>
<div class="abs" id="sideedge" style="left:221.600px;top:31px;width:1.200px;height:757px;background:rgba(255,255,255,.85)"></div>
<!--SIDEBAR_END-->

<!-- TOPBAR -->
<!--TOPBAR_START-->
<!-- close button -->
<div class="abs" style="left:222.600px;top:0;width:32.200px;height:31.200px;background:rgba(221,219,213,.94);border-radius:0 0 6px 0;border-bottom:1px solid rgba(255,255,255,.55)"></div>
<svg class="abs" style="left:230.800px;top:8px" width="16" height="16" viewBox="0 0 16 16" stroke="#101c28" stroke-width="1.250" fill="none" stroke-linecap="round"><path d="M1 1.500l14 13.200M15 1.500l-14 13.200"/></svg>

<!-- pills -->
<div class="abs" style="left:276.600px;top:14px;width:227px;height:26.600px;border-radius:14px;background:#30c359;box-shadow:inset 0 -1px 0 rgba(0,60,20,.22),0 1px 1px rgba(0,0,0,.2)"></div>
<div class="abs" style="left:511.600px;top:14px;width:227.600px;height:26.600px;border-radius:14px;background:#30c359;box-shadow:inset 0 -1px 0 rgba(0,60,20,.22),0 1px 1px rgba(0,0,0,.2)"></div>
<div class="abs" style="left:748px;top:14px;width:226.600px;height:26.600px;border-radius:14px;background:#fbfbfb;box-shadow:0 1px 1px rgba(0,0,0,.25)"></div>

<!-- rain cloud icon -->
<svg class="abs" style="left:371px;top:19.500px" width="16" height="16" viewBox="0 0 16 16" fill="none" stroke="#0c1a14" stroke-width="1.100" stroke-linecap="round" stroke-linejoin="round">
  <path d="M4.400 10.800a2.900 2.900 0 0 1-.5-5.700 4 4 0 0 1 7.700-.6 3.200 3.200 0 0 1 .7 6.200"/>
  <path d="M6.600 10.200l-.5 1M8.700 10.200l-.5 1M10.600 10.200l-.5 1M5.900 12.800l-.5 1M8 12.800l-.5 1M10 12.800l-.5 1" stroke-width="1"/>
</svg>
<div class="t" id="t_no" style="left:392.600px;top:23.200px;font-size:10.400px;font-weight:bold;color:#07130c;letter-spacing:0.500px">No</div>

<!-- wind icon -->
<svg class="abs" style="left:591.200px;top:21.900px" width="15" height="13" viewBox="0 0 15 13" fill="none" stroke="#0c1a2a" stroke-width="1" stroke-linecap="round" stroke-linejoin="round">
  <path d="M.5 3.300H8.600a1.450 1.450 0 1 0-1.350-2"/>
  <path d="M.5 5.550H11.300a1.600 1.600 0 1 0-1.500-2.150"/>
  <path d="M.5 7.800H9.800a1.950 1.950 0 1 1-1.850 2.600"/>
</svg>
<div class="t" id="t_wind" style="left:610.100px;top:23.200px;font-size:10.400px;font-weight:bold;color:#07130c;letter-spacing:0.800px">14.4km/h</div>

<!-- temp cloud icon -->
<svg class="abs" style="left:838.800px;top:20.500px" width="16" height="14" viewBox="0 0 16 14" fill="none" stroke="#10181f" stroke-width="1.150" stroke-linecap="round" stroke-linejoin="round">
  <path d="M4.300 12.300a2.900 2.900 0 0 1-.9-5.600 4.100 4.100 0 0 1 4.400-5.200 4 4 0 0 1 2 .7"/>
  <path d="M4.300 12.300h7.500a3.200 3.200 0 0 0 2.700-4.900"/>
  <circle cx="11.800" cy="4" r="2.300"/>
</svg>
<div class="t" id="t_temp" style="left:859.500px;top:23.200px;font-size:10.400px;font-weight:bold;color:#10181f;letter-spacing:0.500px">22°C</div>
<!--TOPBAR_END-->

<!-- PANEL -->
<!--PANEL_START-->
<div class="abs" style="left:276px;top:49.500px;width:698.900px;height:254px;background:#f1f1f1;border-radius:8px;box-shadow:0 1px 3px rgba(0,0,0,.25)"></div>
<div class="abs" style="left:277.400px;top:92.800px;width:696.100px;height:153.200px;background:#e7e8e9;border-radius:4px"></div>
<div class="t" id="t_dm" style="left:296.600px;top:64.400px;font-size:13px;font-weight:bold;color:#0f1720;letter-spacing:0.52px">dronemate-01</div>
<div class="abs" style="left:393.400px;top:62.600px;width:28.800px;height:17.600px;background:#f9f9f9;border-radius:4px;box-shadow:0 0 2px rgba(0,0,0,.12)"></div>
<div class="t" id="t_real" style="left:399.600px;top:67.300px;font-size:8.600px;font-weight:bold;color:#77786f">Real</div>
<svg class="abs" style="left:933px;top:65px" width="15" height="12" viewBox="0 0 15 12" fill="none" stroke="#10181f" stroke-width="1.500" stroke-linecap="round" stroke-linejoin="round"><path d="M2 3.200l5.500 5.500 5.500-5.500"/></svg>

<!-- dividers -->
<div class="abs" style="left:286px;top:170px;width:675px;height:0;border-top:1px solid #dcdedf"></div>
<div class="abs" style="left:513px;top:106px;width:0;height:129px;border-left:1px dotted #cdd0d1"></div>
<div class="abs" style="left:737px;top:106px;width:0;height:129px;border-left:1px dotted #cdd0d1"></div>

<!-- row 1 -->
<svg class="abs" style="left:300.300px;top:120.300px" width="12" height="12" viewBox="0 0 12 12" fill="none" stroke="#a5a195" stroke-width="1.300" stroke-linecap="round"><path d="M2 9.800a.1.100 0 0 0 .1.100M2 6.500a3.500 3.500 0 0 1 3.500 3.500M2 3.200a6.800 6.800 0 0 1 6.800 6.800"/></svg>
<div class="t lbl" id="t_l1" style="left:330px;top:122.1px;letter-spacing:0.3px">Connection</div>
<div class="abs" style="left:330.300px;top:145.600px;width:6px;height:6px;border-radius:50%;background:#2fbf4f"></div>
<div class="t val green" id="t_v1" style="left:341.500px;top:144.0px;letter-spacing:-0.08px">Connected</div>

<svg class="abs" style="left:524px;top:120.600px" width="13" height="13" viewBox="0 0 13 13" fill="none" stroke="#a09c90" stroke-width="1.150" stroke-linecap="round" stroke-linejoin="round"><circle cx="6.500" cy="6.500" r="5.200" stroke-dasharray="3.400 1.700"/><path d="M4.300 6.700l1.600 1.600 2.900-3.200"/></svg>
<div class="t lbl" id="t_l2" style="left:554.600px;top:122.1px;letter-spacing:0.13px">Drone Status</div>
<div class="t val green" id="t_v2" style="left:554.600px;top:144.0px;letter-spacing:-0.27px">Ready for Mission</div>

<svg class="abs" style="left:747.900px;top:119.100px" width="13" height="13" viewBox="0 0 13 13" fill="none" stroke="#a09c90" stroke-width="1.150" stroke-linecap="round"><circle cx="6.500" cy="6.500" r="4.100"/><circle cx="6.500" cy="6.500" r="1.500"/><path d="M6.500 1.300v1.100M6.500 10.600v1.100M1.300 6.500h1.100M10.600 6.500h1.100"/></svg>
<div class="t lbl" id="t_l3" style="left:779px;top:122.1px;letter-spacing:-0.7px">GPS</div>
<div class="t val green" id="t_v3" style="left:779px;top:144.0px;letter-spacing:-0.4px">RTK Fixed</div>
<div class="t val green" id="t_22" style="left:931.800px;top:122.1px">22</div>

<!-- row 2 -->
<svg class="abs" style="left:299.200px;top:185px" width="12.600" height="11.700" viewBox="0 0 14 13" fill="none" stroke="#a5a195" stroke-width="1.350" stroke-linecap="round"><path d="M1.200 4.600a8.200 8.200 0 0 1 11.600 0M3.200 6.800a5.400 5.400 0 0 1 7.600 0M5.200 9a2.600 2.600 0 0 1 3.600 0M7 11.200v.1"/></svg>
<div class="t lbl" id="t_l4" style="left:330px;top:186.7px">GCS Connection</div>
<div class="t val green" id="t_v4" style="left:330px;top:208.7px;letter-spacing:-0.08px">Connected</div>

<svg class="abs" style="left:523.400px;top:185.300px" width="12.600" height="10.800" viewBox="0 0 14 12" fill="none" stroke="#a5a195" stroke-width="1.250" stroke-linecap="round" stroke-linejoin="round"><rect x="1.200" y="2.600" width="9.600" height="6.800" rx="1.600"/><path d="M12.600 4.800v2.400M3.600 5.200v1.600"/></svg>
<div class="t lbl" id="t_l5" style="left:554.600px;top:186.7px;letter-spacing:0.27px">Drone Battery</div>
<div class="t val green" id="t_v5" style="left:554.600px;top:208.7px;letter-spacing:-0.75px">100%</div>
<div class="t" id="t_v5b" style="left:587px;top:208.7px;font-size:11.500px;color:#1c252c;letter-spacing:-0.3px">(25.2 V)</div>

<svg class="abs" style="left:747.900px;top:184.700px" width="13" height="13" viewBox="0 0 13 13" fill="none" stroke="#a09c90" stroke-width="1.200" stroke-linejoin="round"><path d="M6.500 1.500c1.600 0 5 7.300 5 8.900 0 1.900-2.700-.8-5-.8s-5 2.700-5 .8c0-1.600 3.400-8.900 5-8.900z"/></svg>
<div class="t lbl" id="t_l6" style="left:779px;top:186.7px;letter-spacing:0.6px">Attitude</div>
<div class="t val" id="t_v6" style="left:779px;top:208.7px;color:#31575c;text-decoration:underline">Info</div>

<!-- gate closed -->
<div class="abs" style="left:293.500px;top:263.600px;width:84.300px;height:24.600px;background:#f9f9f9;border-radius:12.300px"></div>
<div class="abs" style="left:302px;top:273px;width:6px;height:6px;border-radius:50%;background:#ee2a35"></div>
<div class="t" id="t_gate" style="left:313.400px;top:271.9px;font-size:9.800px;color:#151b20;letter-spacing:0.25px">Gate Closed</div>
<!--PANEL_END-->

<!-- ANNOTATIONS -->
<!--ANNOT_START-->
<!-- [A] -->
<div class="abs" style="left:6.800px;top:178px;width:195.400px;height:615px;border:5px solid transparent;box-shadow:0 0 0 1.800px #fff,inset 0 0 0 1.600px #fff;mix-blend-mode:overlay"></div>
<div class="abs" style="left:6.800px;top:178px;width:195.400px;height:615px;border:5px solid #15212f"></div>
<div class="t ann" id="t_A" style="left:154.200px;top:193.700px;font-size:18.800px;letter-spacing:0.700px">[A]</div>
<!-- [B] -->
<div class="abs" style="left:17.300px;top:116.900px;width:156.400px;height:49.200px;border:2.300px solid #07090c;box-shadow:0 0 0 1px rgba(255,255,255,.9),inset 0 0 0 1px rgba(255,255,255,.9)"></div>
<div class="t ann" id="t_B" style="left:145.100px;top:123.900px;font-size:15.700px;letter-spacing:0.300px">[B]</div>
<!-- [C] -->
<div class="abs" style="left:283.800px;top:53.200px;width:678px;height:187.600px;border:2.800px solid #050709;box-shadow:0 0 0 1.300px rgba(255,255,255,.9),inset 0 0 0 1.400px rgba(255,255,255,.95)"></div>
<div class="t ann" id="t_C" style="left:431.600px;top:64.600px;font-size:22.500px;letter-spacing:0.700px">[C]</div>
<!-- [D] -->
<div class="abs" style="left:265px;top:2.300px;width:727.300px;height:44.500px;border:3.300px solid #ffffff"></div>
<div class="t ann" id="t_D" style="left:924.900px;top:16px;font-size:17.900px;letter-spacing:0.700px">[D]</div>
<!-- arrows -->
<svg class="abs" style="left:0;top:0;pointer-events:none" width="1023" height="793" viewBox="0 0 1023 793" fill="none" stroke-linejoin="round">
  <g stroke="#ffffff" stroke-opacity=".92">
    <path d="M200.200 79.600L165.600 106.200" stroke-width="5.800"/><path d="M167.600 98.800L165.400 106.500L173.600 106.200" stroke-width="5.800" stroke-linecap="round"/>
    <path d="M580.900 76.500H504" stroke-width="6"/><path d="M511 71L503.600 76.500L511 82" stroke-width="6" stroke-linecap="round"/>
    <path d="M95.400 525.300V450" stroke-width="7.600"/><path d="M87.700 457.300L95.400 448.900L103.100 457.300" stroke-width="7.600" stroke-linecap="round"/>
  </g>
  <g stroke="#2ec450" stroke-width="3.100">
    <path d="M200.200 79.600L165.600 106.200"/><path d="M167.600 98.800L165.400 106.500L173.600 106.200" stroke-linecap="round"/>
    <path d="M580.900 76.500H504" stroke-width="3.250"/><path d="M511 71L503.600 76.500L511 82" stroke-width="3.250" stroke-linecap="round"/>
  </g>
  <g stroke="#ff3434" stroke-width="5.200">
    <path d="M95.400 525.300V450"/><path d="M87.700 457.300L95.400 448.900L103.100 457.300" stroke-linecap="round"/>
  </g>
  <g stroke="#ffffff" stroke-width="3.300">
    <path d="M294.500 29.450H345.500"/><path d="M339.200 24.400L346 29.450L339.200 34.500" stroke-linecap="round"/>
  </g>
</svg>
<!--ANNOT_END-->

</div>
</body>
</html>
